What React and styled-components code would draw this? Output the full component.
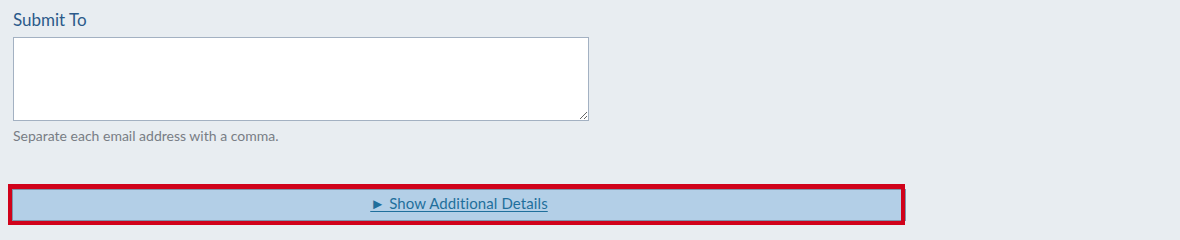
import React from 'react';
import styled, { createGlobalStyle } from 'styled-components';

const GlobalStyle = createGlobalStyle`
  html, body {
    margin: 0;
    padding: 0;
    background: #e8edf1;
    font-family: Lato, "Open Sans", sans-serif;
  }
`;

const Page = styled.div`
  padding: 10px 0 8px 12px;
`;

const Field = styled.div`
  display: flex;
  flex-direction: column;
  align-items: flex-start;
  padding-left: 1px;
`;

const Label = styled.label`
  font-size: 17px;
  line-height: 20px;
  color: #2b5a8a;
`;

const TextArea = styled.textarea`
  box-sizing: border-box;
  display: block;
  margin: 7px 0 0;
  width: 576px;
  height: 84px;
  border: 1px solid #a3b1c2;
  background: #fff;
  font-family: inherit;
  font-size: 14px;
  padding: 4px 6px;
  outline: none;
`;

const Help = styled.p`
  margin: 6px 0 0;
  font-size: 14px;
  line-height: 18px;
  color: #787d85;
`;

const ToggleWrap = styled.div`
  position: relative;
  margin-top: 44px;
  width: 894px;
`;

const ToggleButton = styled.button`
  box-sizing: border-box;
  display: flex;
  align-items: center;
  justify-content: center;
  width: 100%;
  height: 32px;
  padding: 0 0 4px;
  border: 1px solid #7d94ab;
  background: #b3cfe7;
  font-family: inherit;
  font-size: 15px;
  letter-spacing: 0.1px;
  color: #1f6f9c;
  text-decoration: underline;
  text-underline-offset: 2px;
  cursor: pointer;
`;

const Highlight = styled.span`
  position: absolute;
  top: -5px;
  left: -4px;
  right: 1px;
  bottom: -4px;
  border-style: solid;
  border-color: #d0021b;
  border-width: 5px 4px 4px 4px;
  pointer-events: none;
`;

export default function App() {
  return (
    <>
      <GlobalStyle />
      <Page>
        <Field>
          <Label htmlFor="submit-to">Submit To</Label>
          <TextArea id="submit-to" />
          <Help>Separate each email address with a comma.</Help>
        </Field>
        <ToggleWrap>
          <ToggleButton type="button">► Show Additional Details</ToggleButton>
          <Highlight />
        </ToggleWrap>
      </Page>
    </>
  );
}
